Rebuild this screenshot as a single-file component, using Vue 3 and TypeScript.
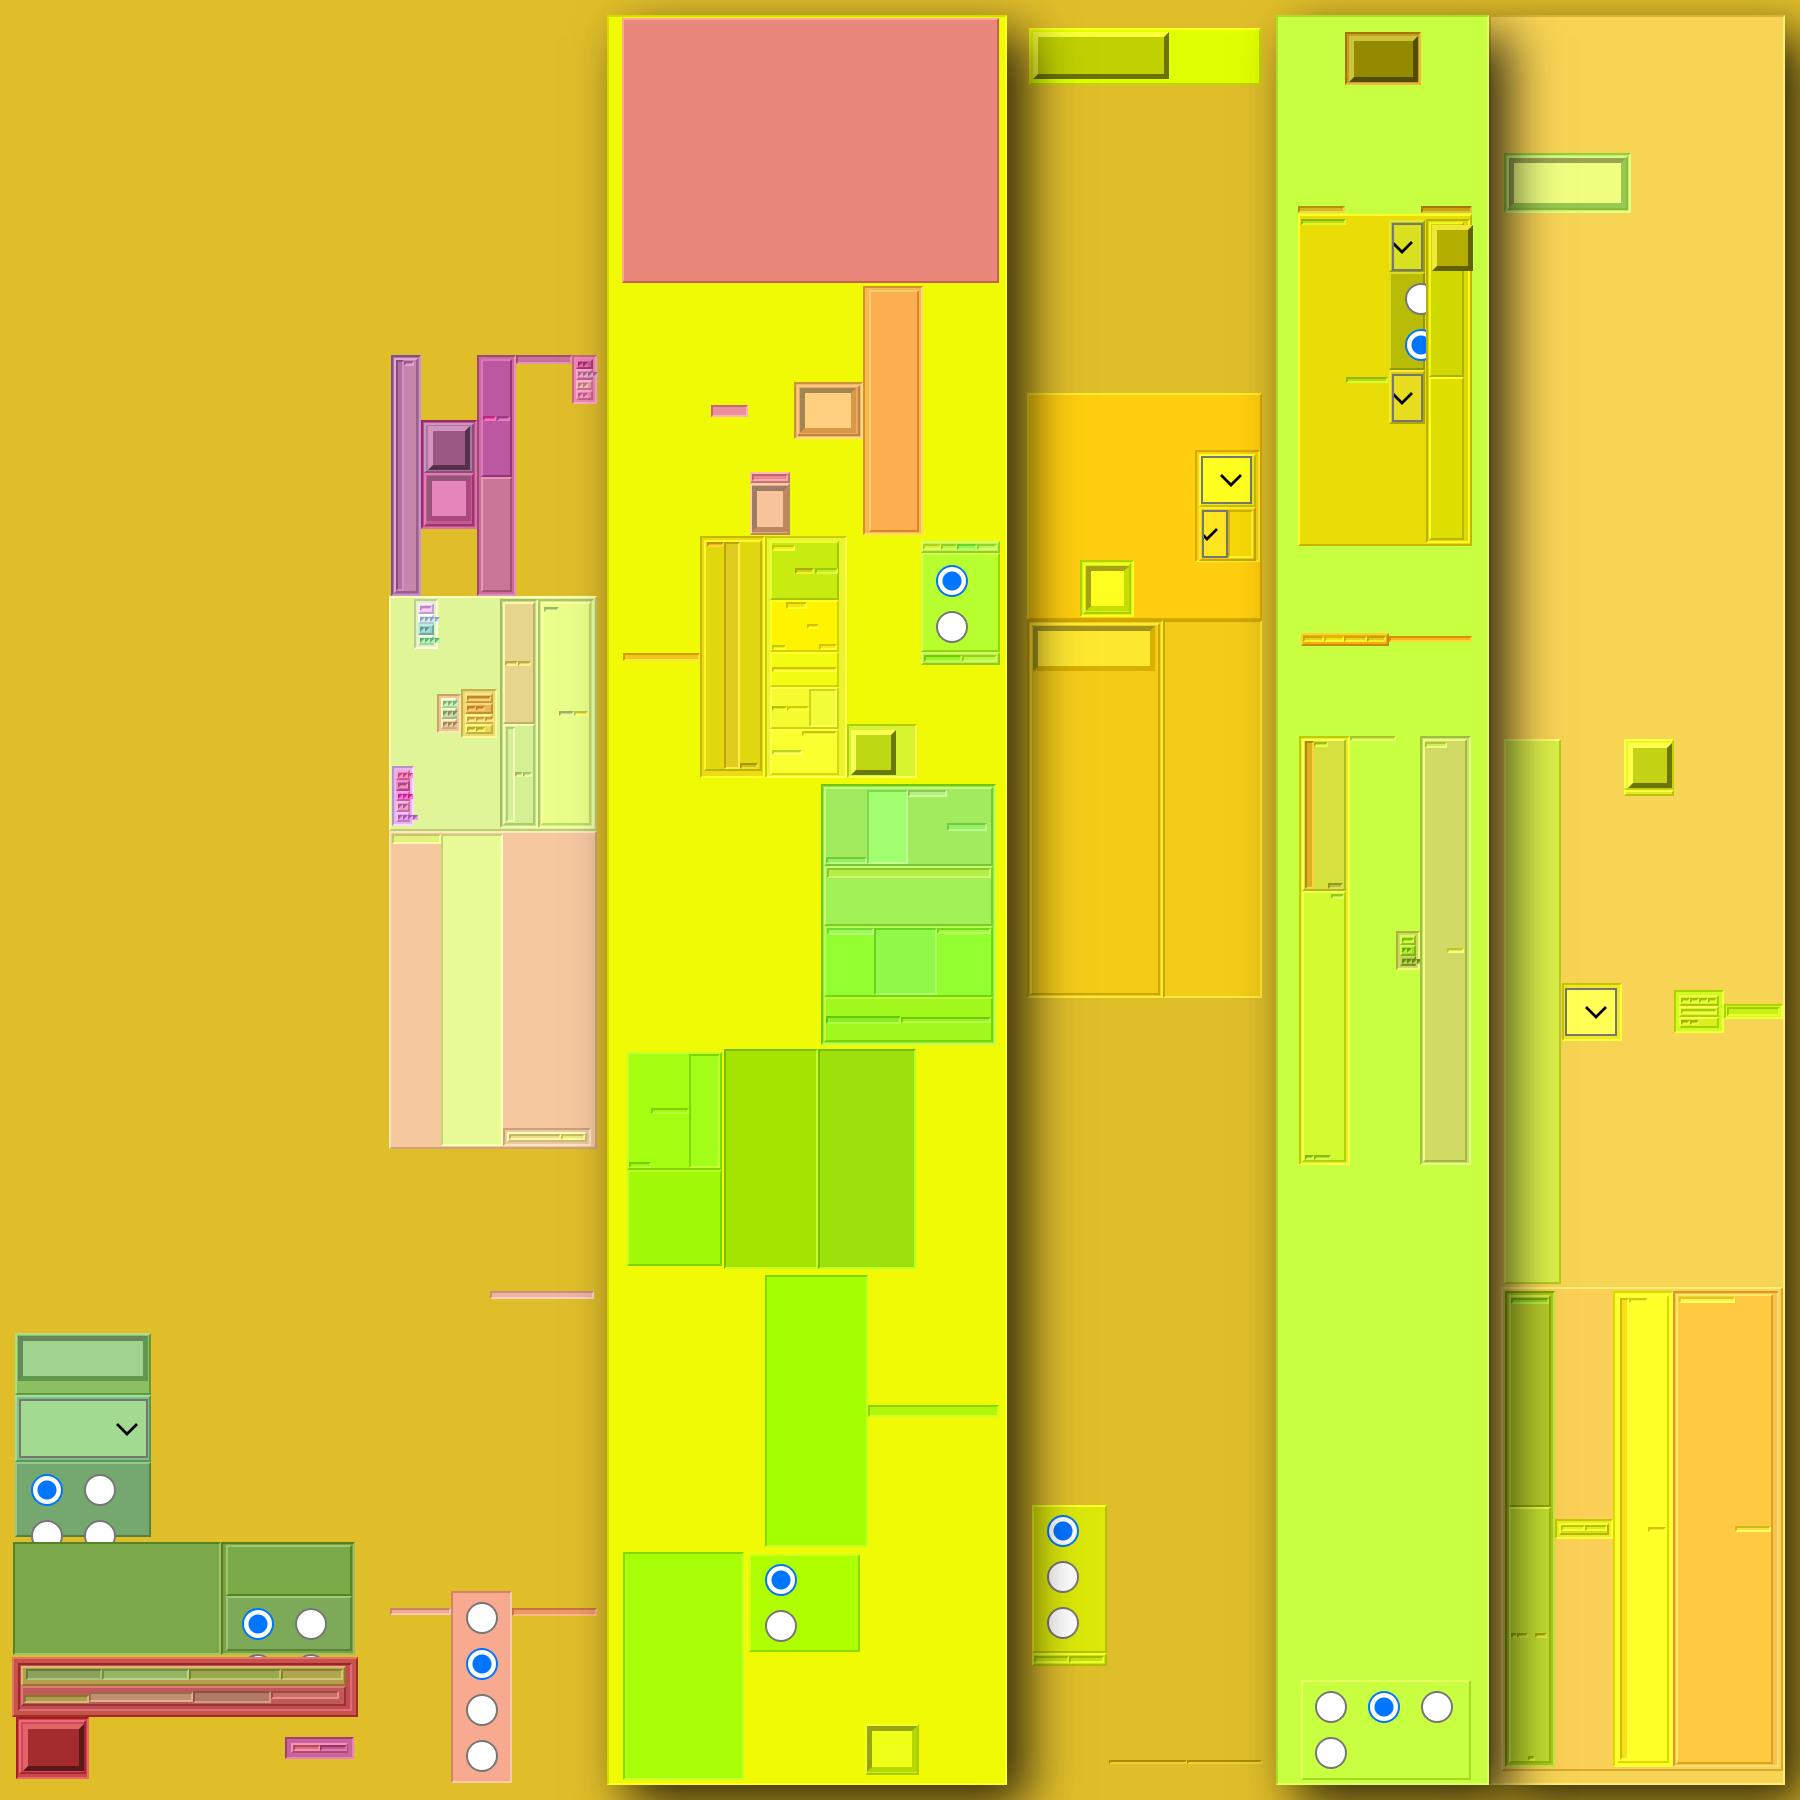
<script setup lang="ts">
defineOptions({ name: 'Panel' })

interface Item {
  t: string
  c?: string
  c2?: string
  w?: number
  h?: number
  g?: number
  o?: number
  p?: number
  a?: string
  row?: boolean
  n?: number
  on?: number
  cols?: number
  name?: string
  k?: Item[]
}
type Opts = Partial<Item>

const props = defineProps<{ node?: Item; inRow?: boolean }>()

/* Shift every channel of a hex colour by a fixed amount. */
function shift(hex: string, by: number): string {
  const part = (i: number) => Math.max(0, Math.min(255, parseInt(hex.slice(i, i + 2), 16) + by))
  return `rgb(${part(1)}, ${part(3)}, ${part(5)})`
}
function scale(hex: string, f: number): string {
  const part = (i: number) => Math.round(parseInt(hex.slice(i, i + 2), 16) * f)
  return `rgb(${part(1)}, ${part(3)}, ${part(5)})`
}

/* g = gap before the item along the flow, o = inset across it, p = padding, a = cross alignment */
function css(n: Item, inRow?: boolean): Record<string, string> {
  const s: Record<string, string> = {}
  if (n.w !== undefined) s.width = n.w + 'px'
  if (n.h !== undefined) s.height = n.h + 'px'
  if (n.g) s[inRow ? 'marginLeft' : 'marginTop'] = n.g + 'px'
  if (n.o) s[inRow ? 'marginTop' : 'marginLeft'] = n.o + 'px'
  if (n.p !== undefined) s.padding = n.p + 'px'
  if (n.c) {
    s['--c'] = n.c
    if (n.t === 'button') {
      s['--lite'] = shift(n.c, 58)
      s['--deep'] = scale(n.c, 0.55)
    } else if (n.t === 'input') {
      s['--lite'] = n.c2 ?? n.c
      s['--deep'] = scale(n.c, 0.64)
    } else {
      s['--lite'] = shift(n.c, 32)
      s['--deep'] = shift(n.c, -38)
    }
  }
  if (n.cols) s['--cols'] = String(n.cols)
  return s
}
function cls(n: Item, inRow?: boolean): string[] {
  const grow = inRow ? n.w === undefined : n.h === undefined
  return [n.t, n.row ? 'row' : 'col', grow && n.t !== 'radios' ? 'grow' : 'fixed', n.a ? 'at-' + n.a : '']
}

let serial = 0
const _ = undefined
type N = number | undefined
const I = (c: string, w: N, h: N, o: Opts = {}, k: Item[] = []): Item => ({ t: 'inset', c, w, h, k, ...o })
const O = (c: string, w: N, h: N, o: Opts = {}, k: Item[] = []): Item => ({ t: 'outset', c, w, h, k, ...o })
const R = (w: N, h: N, o: Opts, k: Item[]): Item => ({ t: 'group', row: true, w, h, k, ...o })
const C = (w: N, h: N, o: Opts, k: Item[]): Item => ({ t: 'group', w, h, k, ...o })
const button = (c: string, w: N, h: N, o: Opts = {}): Item => ({ t: 'button', c, w, h, name: `Button ${++serial}`, ...o })
const field = (c: string, c2: string, w: N, h: N, o: Opts = {}): Item => ({ t: 'input', c, c2, w, h, name: `Field ${++serial}`, ...o })
const pick = (c: string, w: N, h: N, o: Opts = {}): Item => ({ t: 'select', c, w, h, name: `Choice ${++serial}`, ...o })
const radios = (n: number, on: number, cols: number, o: Opts = {}): Item => ({ t: 'radios', n, on, cols, name: `group-${++serial}`, ...o })

/* A small framed list: every entry is a row colour, its chip colour and the chip count. */
const mini = (c: string, w: number, h: number, rows: [string, string, number][], o: Opts = {}, chip = 5): Item =>
  I(c, w, h, { p: 2, ...o }, rows.map(([rc, cc, n]) =>
    O(rc, _, _, { row: true, p: 0 }, Array.from({ length: n }, () => I(cc, n === 1 ? undefined : chip, 5, { p: 0, o: 1 })))))

const colA: Item[] = [
  O('#8cbf62', 136, 62, { o: 3 }, [field('#9fd38e', '#60984e', _, 45)]),
  O('#7fc080', 136, 67, { o: 3, p: 2 }, [pick('#a2da92', 129, 59)]),
  O('#74a86e', 136, 75, { o: 3 }, [radios(4, 0, 2, { o: 13, g: 9 })]),
  R(342, 113, { o: 1, g: 5 }, [
    I('#7ba84b', 208, _),
    I('#80a044', 134, _, {}, [
      O('#7aaa48', 126, 51, { o: 2 }),
      O('#7caa58', 126, 55, { o: 2 }, [radios(4, 0, 2, { o: 13, g: 9 })]),
    ]),
  ]),
  O('#c8534a', 346, 60, { g: 2, p: 4 }, [
    I('#c04c54', _, _, {}, [
      O('#b89c50', 325, 20, { row: true }, [
        I('#8aa25c', 76, 11, { g: 2 }), I('#96b566', 87, 11), I('#9aa850', 92, 11), I('#b0a550', 62, 11),
      ]),
      O('#c05a58', 325, 20, { row: true }, [
        I('#b09c50', 65, 8, { o: 6 }), I('#c09070', 104, 10, { o: 3 }), I('#b07a66', 78, 12, { o: 2 }), I('#c87068', 68, 8, { o: 2 }),
      ]),
    ]),
  ]),
  R(_, 62, { o: 4 }, [
    I('#c8484a', 73, _, {}, [O('#d0485a', _, 54, {}, [button('#a52c2e', 61, 47, { o: 1, g: 1 })])]),
    I('#c8649c', 69, 22, { g: 196, o: 20, p: 4 }, [
      O('#d870a0', _, _, { row: true, p: 0 }, [I('#d87080', 27, 6, { p: 0 }), I('#c05a8c', 27, 6, { p: 0 })]),
    ]),
  ]),
]

const colB: Item[] = [
  R(206, 241, { g: 340, o: 2 }, [
    I('#a874b0', 30, _, {}, [
      O('#c585ad', _, _, { row: true, p: 0 }, [I('#b070a4', 8, _, { p: 0 }), I('#c080b8', 10, 5, { p: 0, o: 1 })]),
    ]),
    I('#c0508c', 56, 109, { o: 65 }, [
      O('#a878a0', _, 50, {}, [button('#9b5885', 42, 44, { o: 1 })]),
      O('#c45c94', _, 53, {}, [field('#e685bb', '#ab497e', 44, 45)]),
    ]),
    I('#c86c9c', 39, _, { p: 2 }, [
      O('#bc58a0', _, 118, { row: true, p: 0 }, [I('#e050a0', 13, 5, { a: 'c', p: 0 }), I('#c060a8', 13, 5, { a: 'c', p: 0, g: 1 })]),
      O('#ca7699', _, _),
    ]),
    I('#c8709c', 56, 9),
    mini('#f08cb0', 25, 49, [['#d0609c', '#c85090', 2], ['#e888b0', '#d090b0', 4], ['#f09cb0', '#e0a0a0', 2], ['#f088b0', '#e080a8', 2]]),
  ]),
  O('#dff598', 208, 235, { row: true }, [
    C(108, _, {}, [
      mini('#e0f4c0', 24, 50, [['#e8c8f0', '#e0b0e8', 1], ['#d8f0f8', '#b8c8d8', 4], ['#98d0c8', '#88c0b8', 2], ['#d0f4c8', '#90d898', 4]], { o: 22 }),
      R(_, 49, { g: 40, o: 45 }, [
        mini('#f0c890', 24, 39, [['#e0f0b8', '#a0d8a0', 3], ['#c8e0a8', '#a8b888', 3], ['#f0d0a0', '#c8a880', 3]], { o: 5 }),
        mini('#ecd870', 36, 49, [['#e8c468', '#e0b050', 1], ['#e8b858', '#e0a850', 2], ['#f4d870', '#ecc860', 3], ['#e8d860', '#d8d050', 2]], {}, 9),
      ]),
      mini('#e0b8ec', 22, 60, [['#f080c0', '#e070a0', 3], ['#d868b0', '#d070a0', 1], ['#f080c8', '#e050b8', 3], ['#e898c8', '#d080b0', 2], ['#f0a0e0', '#c880d0', 4]], { g: 28 }),
    ]),
    I('#c8e08c', 38, _, { p: 1 }, [
      O('#e6d58c', _, 122, { row: true, p: 0 }, [I('#e0d070', 13, 5, { a: 'c', p: 0 }), I('#e0d070', 13, 5, { a: 'c', p: 0 })]),
      O('#d4f094', _, _, { row: true }, [I('#d4f098', 9, _), I('#c8e080', 8, 5, { a: 'c', p: 0 }), I('#d0e888', 9, 5, { a: 'c', p: 0 })]),
    ]),
    I('#d4ec88', _, _, {}, [
      O('#eaff8a', _, _, { row: true }, [
        I('#c0e080', 15, 5, { p: 0, o: 2 }), I('#c8d888', 15, 5, { a: 'c', p: 0 }), I('#e8ec60', 14, 5, { a: 'c', p: 0 }),
      ]),
    ]),
  ]),
  O('#f5c8a0', 208, 318, { row: true }, [
    I('#e4f080', 49, 10),
    I('#e8fa96', 62, _),
    I('#f0c8a0', 88, 18, { a: 'e', p: 2 }, [
      O('#f8e0a0', _, _, { row: true, p: 0 }, [I('#f0dc88', _, 6, { p: 0 }), I('#f0e880', 24, 6, { p: 0 })]),
    ]),
  ]),
  I('#f0b4a4', 104, 8, { g: 142, o: 101 }),
  R(_, 192, { g: 292, o: 1 }, [
    I('#f0a890', 61, 7, { o: 17 }),
    I('#f8aa90', 61, _, {}, [radios(4, 1, 1, { g: 8, o: 12 })]),
    I('#f09868', _, 8, { o: 17 }),
  ]),
]

const colC: Item[] = [
  O('#e9877b', _, 265, {}),
  R(_, 249, { g: 3 }, [
    I('#ea909c', 37, 12, { g: 89, a: 'c' }),
    C(40, 63, { g: 2, a: 'e' }, [
      O('#ec9898', _, 11, { p: 0 }, [I('#e88890', _, _, { p: 0 })]),
      O('#e0ae84', _, 52, { p: 0 }, [field('#f8c49c', '#bc8860', 36, 46, { g: 1 })]),
    ]),
    I('#f0b868', 69, 57, { g: 4, a: 'c' }, [O('#e8a860', _, _, {}, [field('#ffd080', '#d89848', 56, 45)])]),
    I('#f8b850', 60, _, { p: 2 }, [O('#fcae50', _, 242, { o: 2 })]),
  ]),
  R(_, 242, { g: 1 }, [
    I('#f4c41c', 77, 8, { g: 1, a: 'c' }),
    I('#ecdc10', 65, _, { p: 2 }, [
      O('#e2d810', 58, 231, { row: true, p: 0 }, [
        I('#ecb818', 17, 5, { p: 0, g: 1 }), I('#e0cc20', 16, _), I('#ccc010', 18, 6, { a: 'e', p: 0 }),
      ]),
    ]),
    I('#ecf430', 82, _, { p: 3 }, [
      O('#c8ec10', 69, 59, { row: true, p: 0 }, [
        I('#e8f020', 23, 6, { p: 0, o: 2 }), I('#d0d010', 19, 6, { a: 'c', p: 0 }), I('#c0f020', 23, 6, { a: 'c', p: 0, g: 1 }),
      ]),
      O('#fff400', 69, 52, { row: true, p: 0 }, [
        I('#e8f010', 14, 5, { a: 'e', p: 0 }), I('#f4e410', 21, 7, { p: 0 }), I('#f8e810', 12, 5, { a: 'c', p: 0 }), I('#f8e810', 18, 6, { a: 'e', p: 0 }),
      ]),
      O('#f2fc10', 69, 35, { row: true, p: 0 }, [I('#f4e818', _, 5, { a: 'c', p: 0 })]),
      O('#f4fc30', 69, 42, { row: true, p: 0 }, [
        I('#dce818', 15, 5, { a: 'c', p: 0 }), I('#f0f428', 22, 5, { a: 'c', p: 0 }), I('#f2fc38', _, _),
      ]),
      O('#faff30', 69, 46, { row: true, p: 0 }, [I('#e4f848', 30, 5, { a: 'c', p: 0 }), I('#ecec20', _, 5, { p: 0 })]),
    ]),
    I('#d8f430', 70, 54, { a: 'e' }, [button('#bed814', 45, 45, { g: 3, o: 1 })]),
    C(79, 124, { g: 4, o: 5 }, [
      O('#b8f848', _, 12, { row: true, p: 0 }, [I('#d0f840', 18, 6, { p: 0, o: 1 }), I('#b8f840', 16, 6, { p: 0, o: 1 }), I('#90f850', 20, 6, { p: 0, o: 1 }), I('#b8f850', 20, 6, { p: 0, o: 1 })]),
      O('#b8ff30', _, 99, {}, [radios(2, 0, 1, { g: 9, o: 12 })]),
      O('#b4f048', _, 13, { row: true, p: 0 }, [I('#9cf028', 38, 7, { p: 0, g: 1, o: 1 }), I('#b8f840', 35, 7, { p: 0, o: 1 })]),
    ]),
  ]),
  I('#98ec38', 175, 261, { g: 6, o: 199 }, [
    O('#a2ea5e', _, 79, { row: true, p: 0 }, [
      I('#98f060', 41, 7, { a: 'e', p: 0 }), I('#a2ff70', 41, _, { o: 1 }), I('#b4f080', 39, 7, { p: 0, o: 1 }), I('#98f068', 40, 8, { a: 'c', p: 0 }),
    ]),
    O('#a0f056', _, 60, { p: 0 }, [I('#b0f048', _, 10, { o: 1 })]),
    O('#94ff30', _, 71, { row: true, p: 0 }, [I('#9cfc58', 47, 7, { p: 0, g: 1 }), I('#90f848', 63, _), I('#9cfc40', _, 6, { p: 0 })]),
    O('#a0f81c', _, 45, { row: true, p: 0 }, [I('#8cec24', 75, 8, { a: 'c', p: 0 }), I('#98f028', _, 6, { a: 'c', p: 0 })]),
  ]),
  R(_, 220, { g: 4, o: 5 }, [
    C(95, 214, { o: 3 }, [
      O('#a4ff10', _, 118, { row: true, p: 0 }, [
        I('#98f810', 22, 6, { a: 'e', p: 0 }), I('#a0f818', 38, 6, { a: 'c', p: 0 }), I('#a4ff18', _, _),
      ]),
      O('#a0fa08', _, 96),
    ]),
    I('#a4e400', 94, _, { g: 2 }),
    I('#9ce00c', 98, _),
  ]),
  R(_, 272, { g: 6 }, [I('#a4ff00', 103, _, { g: 143 }), I('#b0f808', _, 12, { a: 'c' })]),
  R(_, 228, { g: 5, o: 1 }, [
    I('#a8ff08', 121, _),
    O('#b0ff00', 111, 98, { g: 5, o: 2 }, [radios(2, 0, 1, { g: 7, o: 13 })]),
    O('#d0f010', 54, 51, { g: 5, o: 172, p: 0 }, [field('#eeff18', '#b4d800', _, 46)]),
  ]),
]

const colD: Item[] = [
  O('#e0ff00', 232, 57, { g: 13, o: 2, p: 2 }, [button('#c0d000', 136, 47)]),
  O('#ffce0e', 235, 227, { g: 308, row: true }, [
    I('#d8f808', 54, 57, { g: 50, a: 'e' }, [O('#d8f010', _, _, {}, [field('#ffff20', '#c4de00', 43, 45)])]),
    I('#f8d010', 65, 112, { g: 61, o: 54, p: 2 }, [
      O('#ece810', 57, 53, { p: 0 }, [pick('#ffff20', 51, 48)]),
      O('#f0cc10', 57, 54, { row: true, p: 1 }, [pick('#ffe620', 26, 48), I('#f6d808', _, 48)]),
    ]),
  ]),
  R(235, 378, {}, [
    I('#f4cc18', 136, _, { p: 1 }, [O('#f4cc18', _, _, {}, [field('#ffe830', '#d8b000', 122, 45)])]),
    I('#f2cc18', _, _),
  ]),
  O('#dce808', 75, 148, { g: 507, o: 5 }, [radios(3, 0, 1, { g: 7, o: 12 })]),
  O('#d4e408', 75, 13, { o: 5, row: true, p: 0 }, [I('#c8e010', 35, 7, { p: 0, o: 1 }), I('#c8e010', 35, 7, { p: 0, o: 1 })]),
  R(_, 5, { g: 94, o: 82 }, [I('#d0b010', 78, 4, { p: 0 }), I('#d0b010', _, 4, { p: 0 })]),
]

const colE: Item[] = [
  I('#c89c20', 76, 53, { g: 14, o: 47, p: 2 }, [button('#938a00', 69, 46)]),
  R(_, 7, { g: 121 }, [I('#d8b820', 47, _), I('#c8a010', 51, _, { g: 76 })]),
  O('#eadc06', _, 332, { g: 1, row: true }, [
    I('#b8dc10', 45, 6, { o: 2 }),
    I('#b8dc10', 42, 6, { a: 'c' }),
    C(36, _, { g: 1, o: 3 }, [
      O('#c0c810', _, 52, { p: 1 }, [pick('#d8e020', 31, 48)]),
      O('#b8bc06', _, 98, {}, [radios(2, 1, 1, { g: 8, o: 13 })]),
      O('#d4cc10', _, 54, { p: 1 }, [pick('#e8dc20', 31, 48, { g: 1 })]),
    ]),
    I('#e0d808', 44, 324, { g: 1, o: 2 }, [
      O('#d0d800', 35, 155, {}, [button('#b4ae00', 41, 46)]),
      O('#dede00', 35, 163),
    ]),
  ]),
  R(_, 13, { g: 87, o: 3 }, [
    O('#f0b010', 88, _, { row: true, p: 0 }, [I('#e8d010', 21, 6, { p: 0, o: 1 }), I('#f8e010', 20, 6, { p: 0, o: 1 }), I('#f0d010', 23, 6, { p: 0, o: 1 }), I('#e8c810', 19, 6, { p: 0, o: 1 })]),
    I('#f8b818', _, 6, { o: 3 }),
  ]),
  R(_, 429, { g: 90, o: 1 }, [
    I('#e4f028', 51, _, { p: 1 }, [
      O('#d6e03e', 44, 152, { row: true, p: 0 }, [
        I('#dcb020', 9, _, { g: 1 }), I('#c8e030', 14, 5, { p: 0, o: 1 }), I('#b8c040', 15, 6, { a: 'e', p: 0 }),
      ]),
      O('#d4fa30', 44, _, { p: 0 }, [
        I('#b8ec40', 13, 5, { o: 27, g: 1, p: 0 }),
        R(_, 6, { g: 256, o: 1 }, [I('#b0dc30', 9, 5, { p: 0 }), I('#b0e030', 17, 5, { p: 0 })]),
      ]),
    ]),
    I('#c8f048', 46, 5, { p: 0 }),
    mini('#d0d860', 24, 39, [['#b8e840', '#b0e030', 1], ['#a8dc30', '#90d020', 2], ['#a8b848', '#90b030', 4]], { a: 'c' }),
    I('#c4e468', 51, _, { p: 1 }, [
      O('#d2da66', 44, _, { row: true, p: 0 }, [I('#d0ec60', 22, 6, { p: 0, o: 1 }), I('#e0ec58', 17, 5, { a: 'c', p: 0 })]),
    ]),
  ]),
  O('#c8ff40', 170, 100, { g: 515, o: 3 }, [radios(4, 1, 3, { g: 8, o: 11 })]),
]

const colF: Item[] = [
  I('#c0f068', 127, 60, { g: 135, o: 12 }, [O('#b8e060', _, _, { p: 0 }, [field('#f0ff80', '#98c850', _, _)])]),
  R(_, 545, { g: 526, o: 12 }, [
    O('#dcf048', 57, _),
    I('#f0e820', 60, 58, { a: 'c', g: 1 }, [pick('#ffff55', 52, 48, { g: 2 })]),
    C(50, 57, { g: 2 }, [
      O('#e8f828', _, 51, { p: 1 }, [button('#c4d414', 44, 45, { g: 1, o: 1 })]),
      O('#e0e828', _, 6, { p: 0 }),
    ]),
    mini('#d0fc20', 50, 43, [['#d0f028', '#c8e820', 4], ['#d8f430', '#d0f028', 1], ['#d8f020', '#c8d818', 2]], { a: 'c', p: 3 }, 9),
    I('#d0fc20', _, 15, { a: 'c' }, [I('#c8f010', _, _, { p: 0 })]),
  ]),
  O('#fcd056', _, 484, { g: 3, o: 9, row: true, p: 2 }, [
    I('#a8cc20', 50, _, { p: 2 }, [
      O('#b8cc28', _, 212, { p: 0 }, [I('#98d028', _, 6, { p: 0, g: 1 })]),
      O('#c4e030', _, _, { row: true, p: 0 }, [
        I('#b0c420', 6, 5, { a: 'c', p: 0 }), I('#b8c820', 11, 5, { a: 'c', p: 0 }), I('#b8d820', 7, 5, { a: 'e', p: 0 }), I('#c8d020', 12, 5, { a: 'c', p: 0 }),
      ]),
    ]),
    I('#ecec20', 58, 20, { a: 'c', p: 2 }, [O('#d8e018', _, _, { row: true, p: 0 }, [I('#e0f020', 24, 6, { p: 0 }), I('#d8e818', _, 6, { p: 0 })])]),
    I('#ffff20', 60, _, { p: 2 }, [
      O('#ffff28', _, _, { row: true, p: 1 }, [
        I('#f8e018', 9, _), I('#f8f020', 19, 5, { p: 0 }), I('#f8e818', _, 5, { a: 'c', p: 0 }),
      ]),
    ]),
    I('#fcc04c', _, _, { p: 1 }, [
      O('#ffca42', 97, _, { row: true, p: 0 }, [I('#fff048', 56, 6, { p: 0, g: 1, o: 1 }), I('#f4e040', _, 6, { a: 'c', p: 0 })]),
    ]),
  ]),
]

const columns: { id: string; items: Item[] }[] = [
  { id: 'a', items: colA },
  { id: 'b', items: colB },
  { id: 'c', items: colC },
  { id: 'd', items: colD },
  { id: 'e', items: colE },
  { id: 'f', items: colF },
]
</script>

<template>
  <main v-if="!props.node" class="page">
    <section v-for="c in columns" :key="c.id" class="column" :class="'column-' + c.id">
      <Panel v-for="(n, i) in c.items" :key="i" :node="n" />
    </section>
  </main>
  <button
    v-else-if="props.node.t === 'button'"
    type="button"
    :aria-label="props.node.name"
    :class="cls(props.node, props.inRow)"
    :style="css(props.node, props.inRow)"
  ></button>
  <input
    v-else-if="props.node.t === 'input'"
    type="text"
    :aria-label="props.node.name"
    :class="cls(props.node, props.inRow)"
    :style="css(props.node, props.inRow)"
  />
  <div v-else-if="props.node.t === 'select'" :class="cls(props.node, props.inRow)" :style="css(props.node, props.inRow)">
    <select :aria-label="props.node.name"></select>
    <svg class="chevron" viewBox="0 0 22 14" width="22" height="14" aria-hidden="true">
      <path d="M1 1 L11 11 L21 1" fill="none" stroke="#000" stroke-width="2.7" />
    </svg>
  </div>
  <div v-else-if="props.node.t === 'radios'" role="radiogroup" :class="cls(props.node, props.inRow)" :style="css(props.node, props.inRow)">
    <input
      v-for="i in props.node.n"
      :key="i"
      type="radio"
      :name="props.node.name"
      :aria-label="'Option ' + i"
      :checked="i - 1 === props.node.on"
    />
  </div>
  <div v-else :class="cls(props.node, props.inRow)" :style="css(props.node, props.inRow)">
    <Panel v-for="(n, i) in props.node.k" :key="i" :node="n" :in-row="!!props.node.row" />
  </div>
</template>

<style scoped>
.page {
  display: grid;
  grid-template-columns: 346fr 239fr 410fr 255fr 227fr 296fr;
  box-sizing: border-box;
  min-height: 100vh;
  padding: 15px 15px 15px 12px;
  background: #e0be2a;
  overflow: hidden;
  font-family: "Liberation Sans", sans-serif;
}
.column {
  display: flex;
  flex-direction: column;
  box-sizing: border-box;
  min-width: 0;
}
.column-a {
  justify-content: flex-end;
  padding-bottom: 6px;
}
.column-b {
  margin-left: 31px;
}
.column-c,
.column-e,
.column-f {
  position: relative;
  border: 2px solid;
  box-shadow: 20px 20px 48px rgba(0, 0, 0, 0.8);
}
.column-c {
  z-index: 3;
  margin-left: 10px;
  padding: 1px 6px 1px 13px;
  background: #f0fa05;
  border-color: #d2dc04 #ffff20 #ffff20 #d2dc04;
}
.column-d {
  margin-left: 20px;
}
.column-e {
  z-index: 2;
  margin-left: 14px;
  padding: 1px 15px 1px 20px;
  background: #c8ff40;
  border-color: #a8e028 #e0ff60 #e0ff60 #a8e028;
}
.column-f {
  z-index: 1;
  padding: 1px 0 1px 1px;
  background: #f8d454;
  border-color: #d8b438 #fff070 #fff070 #d8b438;
}

.col {
  display: flex;
  flex-direction: column;
}
.row {
  display: flex;
  flex-direction: row;
}
.fixed {
  flex: none;
}
.grow {
  flex: 1 1 0;
  min-width: 0;
  min-height: 0;
}
.at-c {
  align-self: center;
}
.at-e {
  align-self: flex-end;
}

.inset,
.outset {
  box-sizing: border-box;
  padding: 1px;
  background: var(--c);
  border: 2px solid;
}
.inset {
  border-color: var(--deep) var(--lite) var(--lite) var(--deep);
}
.outset {
  border-color: var(--lite) var(--deep) var(--deep) var(--lite);
}

.button,
.input {
  box-sizing: border-box;
  margin: 0;
  padding: 0;
  background: var(--c);
  border: 5px solid;
  border-radius: 0;
}
.button {
  border-color: var(--lite) var(--deep) var(--deep) var(--lite);
}
.input {
  border-color: var(--deep) var(--lite) var(--lite) var(--deep);
}

.select {
  position: relative;
  box-sizing: border-box;
  overflow: hidden;
  background: var(--c);
  border: 2px solid #767676;
}
.select select {
  appearance: none;
  display: block;
  width: 100%;
  height: 100%;
  margin: 0;
  padding: 0;
  background: transparent;
  border: 0;
  border-radius: 0;
}
.chevron {
  position: absolute;
  top: 50%;
  right: 8px;
  margin-top: -6px;
  pointer-events: none;
}

.radios {
  display: grid;
  grid-template-columns: repeat(var(--cols), 32px);
  gap: 14px 21px;
}
.radios input {
  appearance: none;
  box-sizing: border-box;
  width: 32px;
  height: 32px;
  margin: 0;
  background: #fff;
  border: 2px solid #767676;
  border-radius: 50%;
}
.radios input:checked {
  background: radial-gradient(circle, #0075ff 9px, #fff 10px);
  border-color: #0075ff;
}
</style>

<style>
body {
  margin: 0;
  background: #e0be2a;
}
</style>
